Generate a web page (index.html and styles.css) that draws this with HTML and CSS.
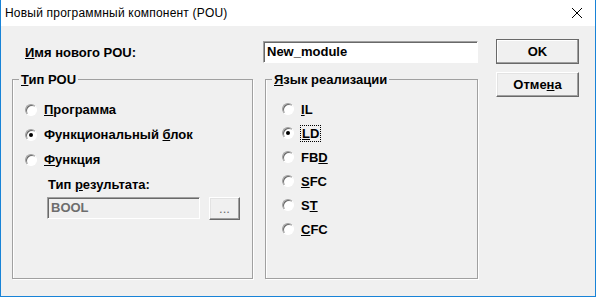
FILE: index.html
```html
<!DOCTYPE html>
<html lang="ru">
<head>
    <meta charset="UTF-8">
    <title>Новый программный компонент (POU)</title>
    <link rel="stylesheet" href="styles.css">
</head>
<body>
    <div class="window">
        <div class="titlebar">
            <span class="title">Новый программный компонент (POU)</span>
            <svg class="close" width="12" height="12" viewBox="0 0 12 12">
                <path d="M1 1 L11 11 M11 1 L1 11" stroke="#000" stroke-width="1" fill="none"/>
            </svg>
        </div>

        <div class="content">
            <div class="main">
                <div class="name-row">
                    <label class="name-label"><u>И</u>мя нового POU:</label>
                    <div class="field">New_module</div>
                </div>

                <div class="groups">
                    <fieldset class="group group-type">
                        <legend><u>Т</u>ип POU</legend>
                        <div class="options">
                            <div class="option"><span class="radio"></span><span><u>П</u>рограмма</span></div>
                            <div class="option"><span class="radio checked"></span><span>Функциональный <u>б</u>лок</span></div>
                            <div class="option"><span class="radio"></span><span><u>Ф</u>ункция</span></div>
                        </div>
                        <div class="result">
                            <div class="result-label">Тип <u>р</u>езультата:</div>
                            <div class="result-row">
                                <div class="field disabled">BOOL</div>
                                <div class="btn small">...</div>
                            </div>
                        </div>
                    </fieldset>

                    <fieldset class="group group-lang">
                        <legend><u>Я</u>зык реализации</legend>
                        <div class="options">
                            <div class="option"><span class="radio"></span><span><u>I</u>L</span></div>
                            <div class="option"><span class="radio checked"></span><span class="focus"><u>L</u>D</span></div>
                            <div class="option"><span class="radio"></span><span>FB<u>D</u></span></div>
                            <div class="option"><span class="radio"></span><span><u>S</u>FC</span></div>
                            <div class="option"><span class="radio"></span><span>S<u>T</u></span></div>
                            <div class="option"><span class="radio"></span><span><u>C</u>FC</span></div>
                        </div>
                    </fieldset>
                </div>
            </div>

            <div class="buttons">
                <div class="btn default">OK</div>
                <div class="btn">Отме<u>н</u>а</div>
            </div>
        </div>
    </div>
</body>
</html>
```

FILE: styles.css
```css
* {
    margin: 0;
    padding: 0;
    box-sizing: border-box;
}

body {
    background: #f0f0f0;
    font-family: 'Liberation Sans', Arial, sans-serif;
    font-size: 13px;
    font-weight: bold;
    color: #000;
}

.window {
    width: 596px;
    height: 297px;
    background: #f0f0f0;
    border: 1px solid #1883d7;
    border-top: none;
    display: flex;
    flex-direction: column;
}

.titlebar {
    height: 26px;
    background: #fff;
    display: flex;
    align-items: center;
    justify-content: space-between;
    padding: 0 12px 0 4px;
}

.title {
    font-family: 'Liberation Sans', sans-serif;
    font-weight: normal;
    font-size: 12px;
    letter-spacing: 0.2px;
}

.close {
    display: block;
}

.content {
    display: flex;
    gap: 18px;
    padding-left: 11px;
}

.main {
    width: 466px;
    display: flex;
    flex-direction: column;
}

.name-row {
    display: flex;
    align-items: center;
    justify-content: space-between;
    margin-top: 15px;
    padding-left: 13px;
}

.field {
    width: 215px;
    height: 22px;
    background: #fff;
    border: 1px solid;
    border-color: #a0a0a0 #fff #fff #a0a0a0;
    box-shadow: inset 1px 1px 0 #696969;
    padding: 2px 0 0 3px;
    line-height: 16px;
}

.field.disabled {
    width: 153px;
    background: #f0f0f0;
    color: #6d6d6d;
}

.groups {
    display: flex;
    gap: 12px;
    margin-top: 9px;
}

.group {
    height: 207px;
    border: 1px solid #a0a0a0;
    box-shadow: 1px 1px 0 #fff, inset 1px 0 0 #fff;
    padding: 0;
}

.group legend {
    margin-left: 6px;
    padding: 0 2px;
    line-height: 15px;
}

.group-type {
    width: 241px;
}

.group-lang {
    width: 213px;
}

.options {
    display: flex;
    flex-direction: column;
}

.group-type .options {
    padding: 10px 0 0 12px;
}

.group-type .option {
    height: 25px;
}

.group-lang .options {
    padding: 10px 0 0 16px;
}

.option {
    display: flex;
    align-items: center;
    height: 24px;
    gap: 7px;
}

.radio {
    width: 12px;
    height: 12px;
    border-radius: 50%;
    border: 1px solid;
    border-color: #a0a0a0 #fff #fff #a0a0a0;
    background: #fff;
    box-shadow: inset 1px 1px 0 #696969;
    display: flex;
    align-items: center;
    justify-content: center;
}

.radio.checked::after {
    content: "";
    width: 4px;
    height: 4px;
    border-radius: 50%;
    background: #000;
}

.focus {
    outline: 1px dotted #000;
    padding: 0 1px;
    line-height: 15px;
}

.result {
    padding: 0 0 0 34px;
    margin-top: 5px;
}

.result-label {
    line-height: 15px;
    margin-left: 1px;
}

.result-row {
    display: flex;
    gap: 9px;
    margin-top: 5px;
}

.btn {
    width: 83px;
    height: 25px;
    display: flex;
    align-items: center;
    justify-content: center;
    background: #f0f0f0;
    border: 1px solid;
    border-color: #fff #696969 #696969 #fff;
    box-shadow: inset -1px -1px 0 #a0a0a0, inset 1px 1px 0 #e3e3e3;
}

.btn.default {
    border: 1px solid #696969;
    box-shadow: inset -1px -1px 0 #a0a0a0, inset 1px 1px 0 #fff;
}

.btn.small {
    width: 31px;
    height: 23px;
    font-weight: normal;
    color: #6d6d6d;
}

.buttons {
    display: flex;
    flex-direction: column;
    gap: 8px;
    margin-top: 13px;
}
```
